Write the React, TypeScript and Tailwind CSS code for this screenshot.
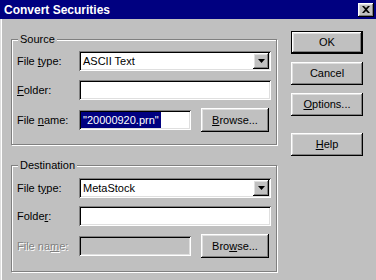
const raised =
  "shadow-[inset_-1px_-1px_0_#000,inset_1px_1px_0_#fff,inset_-2px_-2px_0_#808080,inset_2px_2px_0_#dfdfdf]";
const sunken =
  "shadow-[inset_1px_1px_0_#808080,inset_-1px_-1px_0_#fff,inset_2px_2px_0_#000,inset_-2px_-2px_0_#dfdfdf]";

const Button = ({
  children,
  isDefault,
  className = "",
}: {
  children: React.ReactNode;
  isDefault?: boolean;
  className?: string;
}) => (
  <div className={`bg-[#c0c0c0] ${isDefault ? "border border-black" : ""} ${className}`}>
    <div className={`w-full h-full flex items-center justify-center ${raised}`}>{children}</div>
  </div>
);

const Arrow = () => (
  <div className={`w-[16px] h-[16px] bg-[#c0c0c0] flex items-center justify-center ${raised}`}>
    <svg width="7" height="4" viewBox="0 0 7 4">
      <path d="M0 0h7L3.5 4z" fill="#000" />
    </svg>
  </div>
);

const Group = ({
  label,
  className = "",
  children,
}: {
  label: string;
  className?: string;
  children: React.ReactNode;
}) => (
  <div
    className={`relative w-[266px] border border-[#808080] shadow-[1px_1px_0_#fff,inset_1px_1px_0_#fff] flex flex-col pl-[5px] ${className}`}
  >
    <div className="absolute -top-[7px] left-[6px] px-[2px] bg-[#c0c0c0] leading-[13px]">{label}</div>
    {children}
  </div>
);

const Label = ({ children, disabled }: { children: React.ReactNode; disabled?: boolean }) => (
  <div
    className={`w-[62px] ${disabled ? "text-[#808080] [text-shadow:1px_1px_0_#fff]" : ""}`}
  >
    {children}
  </div>
);

export default function App() {
  return (
    <div className="w-[376px] h-[280px] bg-[#c0c0c0] text-[11px] text-black font-['Liberation_Sans',Arial,sans-serif] flex flex-col overflow-hidden">
      {/* title bar */}
      <div className="h-[19px] bg-[#000080] flex items-center justify-between pl-[4px] pr-[2px]">
        <span className="text-white font-bold text-[12px]">Convert Securities</span>
        <div className={`w-[16px] h-[14px] bg-[#c0c0c0] flex items-center justify-center ${raised}`}>
          <svg width="8" height="7" viewBox="0 0 8 7">
            <path d="M0 0h2l2 2 2-2h2L5 3.5 8 7H6L4 5 2 7H0l3-3.5z" fill="#000" />
          </svg>
        </div>
      </div>

      <div className="flex shadow-[inset_1px_0_0_#dfdfdf,inset_2px_0_0_#fff] flex-1">
        <div className="ml-[11px] mt-[20px] flex flex-col">
          <Group label="Source" className="h-[106px]">
            <div className="mt-[11px] flex items-center h-[20px]">
              <Label>
                File <u>t</u>ype:
              </Label>
              <div className={`w-[192px] h-[20px] bg-white flex items-center justify-between pl-[4px] pr-[2px] ${sunken}`}>
                <span>ASCII Text</span>
                <Arrow />
              </div>
            </div>
            <div className="mt-[9px] flex items-center h-[20px]">
              <Label>
                <u>F</u>older:
              </Label>
              <div className={`w-[192px] h-[20px] bg-white ${sunken}`} />
            </div>
            <div className="mt-[8px] flex items-center h-[24px]">
              <Label>
                File <u>n</u>ame:
              </Label>
              <div className={`w-[112px] h-[20px] bg-white flex items-center pl-[2px] ${sunken}`}>
                <span className="bg-[#000080] text-white px-[2px] leading-[16px]">"20000920.prn"</span>
              </div>
              <Button className="ml-[10px] w-[68px] h-[24px]">
                <span>
                  <u>B</u>rowse...
                </span>
              </Button>
            </div>
          </Group>

          <Group label="Destination" className="h-[107px] mt-[20px]">
            <div className="mt-[12px] flex items-center h-[20px]">
              <Label>
                File t<u>y</u>pe:
              </Label>
              <div className={`w-[192px] h-[20px] bg-white flex items-center justify-between pl-[4px] pr-[2px] ${sunken}`}>
                <span>MetaStock</span>
                <Arrow />
              </div>
            </div>
            <div className="mt-[8px] flex items-center h-[20px]">
              <Label>
                Folde<u>r</u>:
              </Label>
              <div className={`w-[192px] h-[20px] bg-white ${sunken}`} />
            </div>
            <div className="mt-[8px] flex items-center h-[24px]">
              <Label disabled>
                File na<u>m</u>e:
              </Label>
              <div className={`w-[112px] h-[20px] bg-[#c0c0c0] ${sunken}`} />
              <Button className="ml-[10px] w-[68px] h-[24px]">
                <span>
                  Bro<u>w</u>se...
                </span>
              </Button>
            </div>
          </Group>
        </div>

        <div className="ml-[14px] mt-[12px] flex flex-col w-[72px]">
          <Button isDefault className="h-[23px]">
            OK
          </Button>
          <Button className="h-[23px] mt-[8px]">Cancel</Button>
          <Button className="h-[23px] mt-[8px]">
            <span>
              <u>O</u>ptions...
            </span>
          </Button>
          <Button className="h-[23px] mt-[17px]">
            <span>
              <u>H</u>elp
            </span>
          </Button>
        </div>
      </div>
    </div>
  );
}
